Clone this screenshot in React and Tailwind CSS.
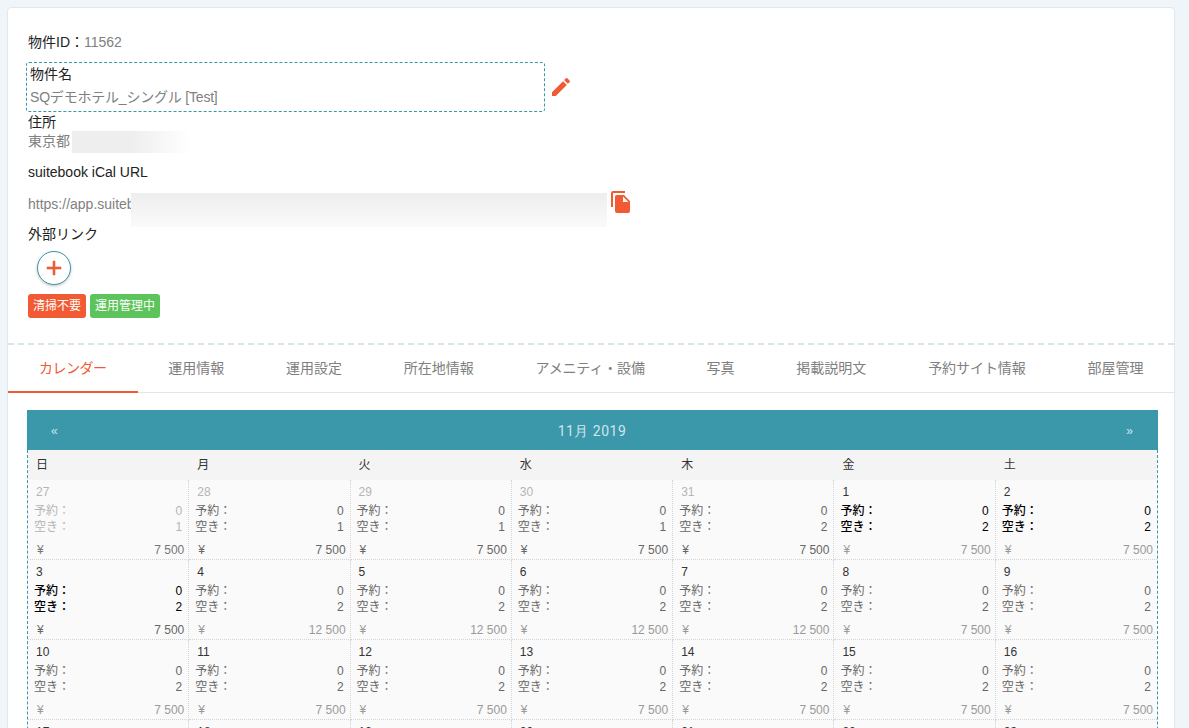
import React from 'react'

const weekdays = ['日', '月', '火', '水', '木', '金', '土']

const tabs = [
  { label: 'カレンダー', tight: 'tracking-[-0.5px] pr-[31.9px] -mr-[1px]' },
  { label: '運用情報' },
  { label: '運用設定' },
  { label: '所在地情報' },
  { label: 'アメニティ・設備', tight: 'tracking-[-0.15px]' },
  { label: '写真' },
  { label: '掲載説明文' },
  { label: '予約サイト情報', tight: 'tracking-[-0.05px]' },
  { label: '部屋管理' },
]

const weeks = [
  [
    { d: 27, free: 1, price: '7 500', faded: true },
    { d: 28, free: 1, price: '7 500', past: true },
    { d: 29, free: 1, price: '7 500', past: true },
    { d: 30, free: 1, price: '7 500', past: true },
    { d: 31, free: 2, price: '7 500', past: true },
    { d: 1, free: 2, price: '7 500', bold: true },
    { d: 2, free: 2, price: '7 500', bold: true },
  ],
  [
    { d: 3, free: 2, price: '7 500', bold: true },
    { d: 4, free: 2, price: '12 500' },
    { d: 5, free: 2, price: '12 500' },
    { d: 6, free: 2, price: '12 500' },
    { d: 7, free: 2, price: '12 500' },
    { d: 8, free: 2, price: '7 500' },
    { d: 9, free: 2, price: '7 500' },
  ],
  [10, 11, 12, 13, 14, 15, 16].map(d => ({ d, free: 2, price: '7 500' })),
  [17, 18, 19, 20, 21, 22, 23].map(d => ({ d, free: 2, price: '7 500' })),
]

function DayCell({ day, last }) {
  const dateColor = day.faded || day.past ? 'text-[#b5b5b5]' : 'text-[#333]'
  const countColor = day.faded ? 'text-[#b5b5b5]' : day.bold ? 'text-black font-medium' : 'text-[#666]'
  const priceColor = day.past || day.bold && day.d === 3 ? 'text-[#666]' : day.faded ? 'text-[#777]' : 'text-[#999]'
  return (
    <div className={`h-[80px] flex flex-col border-b border-dotted border-[#d4d4d4] ${last ? '' : 'border-r'}`}>
      <div className={`pl-[8px] pt-[4px] h-[22px] text-[12px] leading-[16px] ${dateColor}`}>{day.d}</div>
      <div className={`pl-[6px] pr-[6px] pt-[1px] text-[12px] leading-[16px] ${countColor}`}>
        <div className="flex justify-between"><span>予約：</span><span>0</span></div>
        <div className="flex justify-between"><span>空き：</span><span>{day.free}</span></div>
      </div>
      <div className={`mt-auto pl-[9px] pr-[4px] pb-[1px] flex justify-between text-[12px] leading-[16px] ${priceColor}`}>
        <span>¥</span><span>{day.price}</span>
      </div>
    </div>
  )
}

export default function App() {
  return (
    <div className="h-screen overflow-hidden bg-[#f0f5f9] pt-[7px] pl-[7px] pr-[14px] text-[14px] text-[#222] font-['Liberation_Sans','Noto_Sans_CJK_JP',sans-serif]">
      <div className="h-[800px] bg-white rounded-t-[4px] border border-[#dfe8ec]">
        {/* Property info */}
        <div className="h-[335px] pl-[20px] pt-[24px]">
          <div className="h-[20px] leading-[20px]">
            物件ID：<span className="text-[#808080]">11562</span>
          </div>
          <div className="mt-[10px] flex items-center">
            <div className="w-[519px] h-[50px] -ml-[2px] rounded-[3px] border border-dashed border-[#3b97aa] pl-[3px] pt-[1px]">
              <div className="leading-[20px]">物件名</div>
              <div className="mt-[3px] leading-[20px] text-[#808080] tracking-[-0.2px]">SQデモホテル_シングル [Test]</div>
            </div>
            <svg viewBox="0 0 24 24" className="ml-[4px] w-[24px] h-[24px] fill-[#f15a32]">
              <path d="M3 17.25V21h3.75L17.81 9.94l-3.75-3.75L3 17.25zM20.71 7.04a1 1 0 0 0 0-1.41l-2.34-2.34a1 1 0 0 0-1.41 0l-1.83 1.83 3.75 3.75 1.83-1.83z" />
            </svg>
          </div>
          <div className="leading-[20px]">住所</div>
          <div className="-mt-[1px] flex h-[22px] text-[#808080] leading-[20px]">
            <span className="w-[44px] overflow-hidden whitespace-nowrap">東京都</span>
            <div className="w-[118px] h-[22px] bg-gradient-to-r from-[#eeeeee] from-50% to-white" />
          </div>
          <div className="mt-[9px] leading-[20px]">suitebook iCal URL</div>
          <div className="mt-[11px] flex h-[34px] items-start text-[#808080]">
            <span className="w-[103px] mt-[1px] leading-[20px] overflow-hidden whitespace-nowrap">https://app.suitebook</span>
            <div className="w-[476px] h-[34px] bg-gradient-to-b from-[#eeeeee] to-[#fafafa]" />
            <svg viewBox="0 0 24 24" className="ml-[2px] -mt-[3px] w-[24px] h-[24px] fill-[#f15a32]">
              <path d="M16 1H4a2 2 0 0 0-2 2v14h2V3h12V1zm-1 4 6 6v10a2 2 0 0 1-2 2H8a2 2 0 0 1-2-2l.01-14A2 2 0 0 1 8 5h7zm-1 7h5.5L14 6.5V12z" />
            </svg>
          </div>
          <div className="mt-[-3px] leading-[20px]">外部リンク</div>
          <button className="mt-[7px] ml-[9px] w-[34px] h-[34px] rounded-full border border-[#3b97aa] bg-white shadow-[0_1px_3px_rgba(0,0,0,0.25)] flex items-center justify-center">
            <svg viewBox="0 0 24 24" className="w-[24px] h-[24px] fill-[#f15a32] stroke-[#f15a32] stroke-[0.6]">
              <path d="M19 13h-6v6h-2v-6H5v-2h6V5h2v6h6v2z" />
            </svg>
          </button>
          <div className="mt-[9px] flex gap-[4px]">
            <span className="h-[24px] px-[5px] rounded-[3px] bg-[#f15a32] text-white text-[12px] leading-[24px]">清掃不要</span>
            <span className="h-[24px] px-[5px] rounded-[3px] bg-[#5cc45a] text-white text-[12px] leading-[24px]">運用管理中</span>
          </div>
        </div>

        {/* Tabs */}
        <div className="h-[50px] border-t-2 border-dashed border-[#d8e6e8]">
          <div className="flex w-full h-[48px] border-b border-[#e4e4e4]">
            {tabs.map((tab, i) => (
              <div
                key={tab.label}
                className={`px-[30.9px] h-[48px] leading-[47px] whitespace-nowrap ${tab.tight || ''} ${i === 0 ? 'text-[#f15a32] border-b-2 border-[#f15a32]' : 'text-[#808080]'}`}
              >
                {tab.label}
              </div>
            ))}
          </div>
        </div>

        {/* Calendar */}
        <div className="mt-[17px] ml-[19px] mr-[16px]">
          <div className="h-[40px] pt-[2px] bg-[#3b97aa] flex items-center justify-between pl-[24px] pr-[25px] text-[12px] text-[#cfe6ec]">
            <span>«</span>
            <span className="text-[14px] tracking-[0.5px] font-['Roboto',sans-serif]">11月 2019</span>
            <span>»</span>
          </div>
          <div className="border-x border-dashed border-[#3b97aa] bg-[#fafafa]">
            <div className="grid grid-cols-7 h-[30px] bg-[#f4f4f4] text-[12px] leading-[31px] text-[#333]">
              {weekdays.map(w => (
                <div key={w} className="pl-[8px]">{w}</div>
              ))}
            </div>
            {weeks.map(week => (
              <div key={week[0].d} className="grid grid-cols-7">
                {week.map((day, i) => (
                  <DayCell key={day.d} day={day} last={i === 6} />
                ))}
              </div>
            ))}
          </div>
        </div>
      </div>
    </div>
  )
}
